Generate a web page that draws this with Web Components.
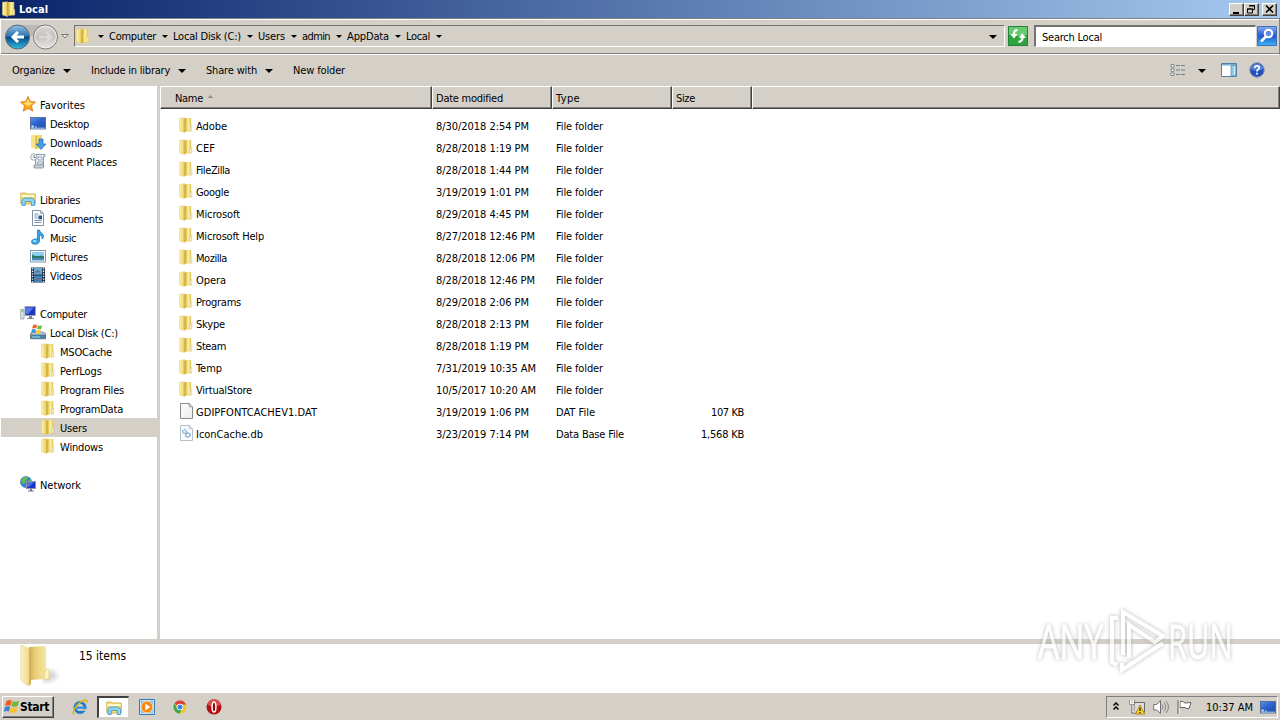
<!DOCTYPE html>
<html lang="en">
<head>
<meta charset="utf-8">
<title>Local</title>
<style>
  html, body { margin: 0; height: 100%; overflow: hidden; }
  body {
    --face: #d4d0c8;
    font: 11px/14px "DejaVu Sans Condensed", "DejaVu Sans", sans-serif;
    color: #000;
    background: #fff;
  }
</style>
</head>
<body>
<explorer-window></explorer-window>
<script>
const arrow = '<svg viewBox="0 0 8 4" width="8" height="4"><path d="M0 0h8L4 4z"/></svg>'
const smallArrow = '<svg viewBox="0 0 6 3" width="6" height="3"><path d="M0 0h6L3 3z"/></svg>'

const icons = {
  folder: `<linearGradient id="a"><stop stop-color="#fdf3b4"/><stop offset=".7" stop-color="#f0d970"/><stop offset="1" stop-color="#e0c052"/></linearGradient>
    <linearGradient id="c"><stop stop-color="#dcbb45"/><stop offset=".5" stop-color="#f2e07c"/><stop offset="1" stop-color="#e2c654"/></linearGradient>
    <path d="M7 1h6.200v13.300L7 14.800z" fill="url(#c)"/><path d="M9.500 1.200h2v12.500h-2z" fill="#f8edaa"/>
    <path d="M1.500 1.300 6.500.7v14.800l-5-1.600z" fill="url(#a)" stroke="#e2cc78" stroke-width=".5"/>
    <path d="M6.300 1.500 7.500 2v12.700l-1.200.6z" fill="#cba83a"/><path d="m12 9 1.700-.5V14h-2z" fill="#fff7ca" stroke="#d5b85c" stroke-width=".5"/>`,
  star: `<path d="m8 .5 2.200 5 5.300.6-4 3.600 1.200 5.400L8 12.400l-4.700 2.700 1.200-5.400-4-3.600 5.300-.6z" fill="#ffa51e" stroke="#d8740c" stroke-width=".8"/><path d="m8 2.500 1.400 4 4 .4-3.500 2L8 10 3 6.800l3.600-.4z" fill="#ffe174"/>`,
  desktop: `<linearGradient id="d" x2=".7" y2="1"><stop stop-color="#5f97e8"/><stop offset=".5" stop-color="#2c62cb"/><stop offset="1" stop-color="#2452ad"/></linearGradient><rect x=".5" y="2.500" width="15" height="11.500" fill="url(#d)" stroke="#49628c" stroke-width=".8"/><path d="M1 12.500h14V14H1z" fill="#88aad3"/><path d="M1.500 10.500h2.200v2H1.500zM5 11.500h1.500v1H5z" fill="#dcecff"/>`,
  downloads: `<path d="M1 1.500 5.500.5V15L1 13.400z" fill="#f7e38a"/><path d="M5.500 1H12v13l-6.500 1z" fill="#efd970"/><path d="M5.500 2h1.200v13H5.500z" fill="#d0ac43"/><path d="M9 5h4v5h3l-5 5.500L6 10h3z" fill="#3f9ee8" stroke="#246ba9" stroke-width=".7"/>`,
  recent: `<path d="M6 1.500h9v2h-1.500V13H5.500V4z" fill="#e9eef2" stroke="#76889a" stroke-width=".8"/><path d="M4 12h9.500q1 2.500-1 3H4z" fill="#cad4dc" stroke="#76889a" stroke-width=".8"/><path d="M8 4h4v3H8zM7.500 9h5v2h-5z" fill="#fff" stroke="#7d95ad" stroke-width=".8"/><circle cx="3.800" cy="4" r="3.200" fill="#f4f6f8" stroke="#8b98a4" stroke-width=".8"/><path d="M4 2v2.500h2" stroke="#566572" fill="none" stroke-width=".8"/>`,
  libraries: `<path d="M.8 4V2h5l1 1h8.500v10H.8z" fill="#f3dc75" stroke="#cda843" stroke-width=".8"/><path d="M1.500 4h13v2h-13z" fill="#fff8ca"/><path d="M2 14.500V9l2-2h8l2.500 2v5.500h-3.200v-4H5.200v4z" fill="#8ed6f7" stroke="#3f91c4" stroke-width=".8"/>`,
  document: `<path d="M2.500.5h8l3 3v12h-11z" fill="#fff" stroke="#8094a9"/><path d="M10.500.5v3h3z" fill="#d1dfeb" stroke="#8094a9" stroke-width=".7"/><path d="M4.500 4h4M4.500 6h3M4.500 8h3M4.500 10.500h7M4.500 12.500h7" stroke="#6e87a4" stroke-width=".9"/><path d="M8.500 5.500h3.500v3.700H8.500z" fill="#294d90"/>`,
  music: `<path d="M7.500 1h2c.3 2.500 4 3.500 4 6.500 0 1-.5 2-1.300 2.600C12.600 7.500 11 6.500 9.500 6v6c0 4-8 4.500-8 .8C1.500 10.500 5 9.500 7.500 10z" fill="#35a3e8" stroke="#1d6fae" stroke-width=".7"/><ellipse cx="4.700" cy="12" rx="2" ry="1.200" fill="#90d8ff"/>`,
  pictures: `<rect x=".5" y="2.500" width="15" height="11.500" fill="#fff" stroke="#7f98ab"/><path d="M2 4h12v5H2z" fill="#8ad0f0"/><path d="M2 6.500q3 2 6 1.500t6 0V11H2z" fill="#2e785c"/><path d="M2 10h12v2.500H2z" fill="#438bc0"/>`,
  videos: `<path d="M1 .5h14v15H1z" fill="#273342"/><path d="M4 1h8v6.500H4z" fill="#5cadde"/><path d="M4 8.500h8V15H4z" fill="#3a83c0"/><path d="m5 5 3-2 3 2.500H4zm0 8 3-2 3 2z" fill="#8a6365"/><path d="M2.500 1v15M13.500 1v15" stroke="#e6edf4" stroke-width="1.300" stroke-dasharray="1.300"/>`,
  computer: `<rect x="5" y="1.500" width="10.500" height="9" fill="#1d36bb" stroke="#a3a9b9"/><path d="M6 2.500h8L8 9H6z" fill="#5678eb"/><path d="M9 11h3v2H9zM7 13h7v1H7z" fill="#7d838b"/><path d="M.7 4.500H4V14H.7z" fill="#dce4e9" stroke="#8795a2" stroke-width=".7"/><path d="M1.500 6h1.700" stroke="#41a446"/>`,
  disk: `<path d="m2 9 1.500-1h9l3 1.500V14H.7V9z" fill="#b8c9d5" stroke="#61798a" stroke-width=".7"/><path d="M.7 11h15v3.800H.7z" fill="#4a86a8" stroke="#496a7e" stroke-width=".7"/><path d="M2 13h8" stroke="#a9e0e9"/><path d="M3 1q2.500-1.200 4 0l-.8 3.500Q4.500 3.500 2.200 4.700z" fill="#ef6524"/><path d="M7.800 1.200q2 1 4.500 0l-1 3.500q-2 1-4.200 0z" fill="#70bd3b"/><path d="m2 5.500q2-1 4 0L5 9q-2-1-4 0z" fill="#3a95dc"/><path d="M6.700 5.500q2 1 4.300 0L10 9Q8 10 5.700 9z" fill="#fecc30"/>`,
  network: `<circle cx="6" cy="6" r="5.600" fill="#2b88d1" stroke="#2773ac" stroke-width=".5"/><path d="M2 3q4-4 6-1L6 5 4 8 1 6zm6 2 3-2v4z" fill="#65bb52"/><rect x="6.500" y="5.500" width="9" height="7" fill="#1b36c4" stroke="#8993ad"/><path d="M7 6h7l-5 5H7z" fill="#5271e5"/><path d="M10 13h2v1.500h2v1H8v-1h2z" fill="#6f7983"/>`,
  file: `<linearGradient id="g" y2="1"><stop stop-color="#fff"/><stop offset="1" stop-color="#eaebed"/></linearGradient><path d="M2.500.5h8.700l3.300 3.300v11.700h-12z" fill="url(#g)" stroke="#888c91"/><path d="M11.200.5v3.300h3.300" fill="#d6d8da" stroke="#888c91" stroke-width=".8"/>`,
  database: `<path d="M2.500.5h8.700l3.300 3.300v11.700h-12z" fill="#f8fbff" stroke="#b6bec8"/><path d="M11.200.5v3.300h3.300" fill="none" stroke="#b6bec8"/><circle cx="6.500" cy="6.500" r="1.800" fill="none" stroke="#82a9d0" stroke-width="1.500" stroke-dasharray="1 .4"/><circle cx="9.800" cy="10" r="2.100" fill="none" stroke="#719dc9" stroke-width="1.500" stroke-dasharray="1 .4"/>`,
  views: `<g fill="#fff" stroke="#6f7d8b" stroke-width=".9"><path d="M1 2.500h3v2.500H1zM1 6.800h3v2.500H1zM1 11h3v2.500H1z"/></g><path d="M6 3.500h4m1 0h4M6 8h4m1 0h4M6 12.500h4m1 0h4" stroke="#6f7d8b" stroke-width="1.200"/>`,
  preview: `<path d="M.5 1.500h15v13H.5z" fill="#fff" stroke="#527da6"/><path d="M1 2h14v1.500H1z" fill="#78acd0"/><path d="M10 3.500h5V14h-5z" fill="#8ec8e3" stroke="#548fac" stroke-width=".7"/><path d="M13 4h1v9h-1z" fill="#d9f3ff"/>`,
  help: `<circle cx="8" cy="8" r="7.200" fill="#2350ba" stroke="#7f91ae"/><path d="M2 7a6 5 0 0 1 12 0q-6 3-12 0" fill="#5782dc"/><path d="M5.800 6Q5.800 3.800 8 3.800q2.300 0 2.300 2Q10.300 7 8.800 7.800q-.8.400-.8 1.700" stroke="#fff" stroke-width="1.700" fill="none"/><path d="M7.100 10.700h1.800v1.700H7.100z" fill="#fff"/>`,
  flagLogo: `<path d="M2.500 2q3-2 5.300-.3L6.500 6.800Q4 5.500 1.200 7z" fill="#ef5b22"/><path d="M8.700 2q2.500 1.500 6.300-.2l-1.300 5Q10.500 8.500 7.300 7z" fill="#6cb83b"/><path d="M1 8q3-1.600 5.200-.2L5 12.500Q2.300 11.300-.3 13z" fill="#3984d4"/><path d="M7 8q3 1.500 6.400 0l-1.300 5.200q-3 1.600-6.400-.2z" fill="#f9c02d"/>`,
  ie: `<circle cx="8" cy="8.500" r="5" fill="none" stroke="#1c7dd0" stroke-width="3"/><path d="M10 10.200h6v1.600h-6z" fill="var(--face)"/><path d="M5 7.500h9.500v2.300H5z" fill="#2b95df"/><path d="M2.500 14.800Q-.5 15 3 9 7.500 2.500 13 1q3-.2 1.500 3" fill="none" stroke="#d9b51d" stroke-width="1.500"/>`,
  player: `<path d="M.5.5h15v15H.5z" fill="#c6e1f5" stroke="#347db8"/><path d="M2 2h12v12H2z" fill="#8fc4e8"/><circle cx="8" cy="8" r="5.900" fill="#f78714" stroke="#fff1c3" stroke-width=".7"/><path d="m6.300 4.500 5 3.500-5 3.500z" fill="#fff"/>`,
  chrome: `<circle cx="8" cy="8" r="6.500" fill="#f4c524"/><path d="M8 8 2.400 4.700A6.500 6.500 0 0 1 14 5.500H8z" fill="#df4035"/><path d="M2.400 4.700A6.500 6.500 0 0 0 7.500 14.500L10 10 5 9z" fill="#36a650"/><circle cx="8" cy="8" r="3.300" fill="#fff"/><circle cx="8" cy="8" r="2.500" fill="#4086e8"/>`,
  opera: `<circle cx="8" cy="8" r="7.500" fill="#b80c14"/><path d="M1.500 6a6.500 6 0 0 1 13 0q-7 3-13 0" fill="#d94a4a"/><ellipse cx="8" cy="8" rx="1.900" ry="5" fill="#8e070d" stroke="#fff" stroke-width="1.500"/>`,
  chevrons: `<path d="m5.500 6.500 2.500-2.500 2.500 2.500m-5 4 2.500-2.500 2.500 2.500" fill="none" stroke="#000" stroke-width="1.500"/>`,
  net: `<path d="M5 3.500h10.500V13H5z" fill="#ddd" stroke="#686868"/><path d="M1 1v4.500h4V1M3 5v9h5" fill="none" stroke="#555"/><path d="M1.500 1v4h3V1M4 6v7h3" fill="none" stroke="#fff"/><path d="m11 6 4.800 9H6.500z" fill="#f8d31d" stroke="#927109" stroke-width=".7"/><path d="M11 8.500V12m0 1v1.200" stroke="#222" stroke-width="1.300"/>`,
  speaker: `<path d="M.7 5.500h3L7.500 1.500v13L3.700 11h-3z" fill="#fff" stroke="#707070"/><path d="M9 5.500q2 2.500 0 5M11 3.800q3.500 4.200 0 8.500M13 2q5 6 0 12" fill="none" stroke="#858585"/>`,
  flag: `<path d="M3 2.500q3-1 5 1.500l6-.5-2 6q-2 1-4-1H3z" fill="#fff" stroke="#606060"/><path d="M2 1v14" stroke="#fff"/><path d="M1 1v14" stroke="#606060"/>`,
  refresh: `<path d="M0 0h20v20H0z" fill="#2da43c"/><path d="M0 0h20v9Q10 12 0 8z" fill="#67ca6c"/><path d="M.5.500h19v19H.5z" fill="none" stroke="#23813a"/><path d="M9.500 4.200Q6 4 6 8M10.500 15.800q4-.3 4-4.300" fill="none" stroke="#fff" stroke-width="2.200"/><path d="M2.300 8h7.200l-3.500 4.500zM10.800 12l3.500-4.800 3.700 4.800z" fill="#fff"/>`,
  search: `<linearGradient id="s" x2="0" y2="1"><stop stop-color="#8aaef2"/><stop offset=".5" stop-color="#2456d4"/><stop offset="1" stop-color="#3cb7ec"/></linearGradient><path d="M.5.500h19v19H.5z" fill="url(#s)" stroke="#3b70c0"/><circle cx="11.500" cy="7.500" r="3.800" fill="#5c8def" stroke="#fff" stroke-width="2"/><path d="m9 10.500-5 5" stroke="#fff" stroke-width="2.500"/>`
}

function render(el, styles, html) {
  el.attachShadow({ mode: 'open' }).innerHTML =
    `<style>*{box-sizing:border-box}svg{display:block}${styles}</style>${html}`
}

class UiIcon extends HTMLElement {
  connectedCallback() {
    if (this.shadowRoot) return
    const size = this.getAttribute('size') || 16
    const box = size > 18 ? 20 : 16
    render(this, ':host{display:block;flex:none}',
      `<svg width="${size}" height="${size}" viewBox="0 0 ${box} ${box}">${icons[this.getAttribute('name')]}</svg>`)
  }
}

// Label whose tracking is adjusted to fill the given width
class UiText extends HTMLElement {
  connectedCallback() {
    if (this.shadowRoot) return
    render(this, ':host{display:block;flex:none;white-space:nowrap;padding-top:var(--drop,2px)}span{display:inline-block}', '<span><slot></slot></span>')
    const width = Number(this.getAttribute('width'))
    if (!width) return
    const span = this.shadowRoot.querySelector('span')
    const natural = span.getBoundingClientRect().width
    const spacing = (width - natural) / this.textContent.length
    span.style.letterSpacing = `${spacing}px`
    this.style.width = `${width}px`
  }
}

class TitleBar extends HTMLElement {
  connectedCallback() {
    render(this, `
      :host { display: flex; height: 18px; padding: 0 3px 0 1px; align-items: center; color: #fff; font-weight: bold; background: linear-gradient(90deg, #0a246a, #a6caf0); }
      ui-text { flex: 1; padding-left: 2px; }
      button { width: 15px; height: 13px; padding: 0; border: 1px solid; border-color: #fff #404040 #404040 #fff; background: var(--face); box-shadow: inset -1px -1px #808080; }
      button:last-child { margin-left: 3px; }
    `, `<ui-icon name="folder"></ui-icon><ui-text>Local</ui-text>
      <button aria-label="Minimize"><svg width="13" height="11"><path d="M3 8h6v2H3z"/></svg></button>
      <button aria-label="Restore"><svg width="13" height="11"><path d="M4.500 1.500h5v4H8M4 2h6M2.500 5h5v4h-5zM2 5h6" fill="none" stroke="#000"/></svg></button>
      <button aria-label="Close"><svg width="13" height="11"><path d="m3 1.500 7 7m0-7-7 7" stroke="#000" stroke-width="1.600"/></svg></button>`)
  }
}

class AddressBar extends HTMLElement {
  connectedCallback() {
    const path = [['Computer', 47], ['Local Disk (C:)', 68], ['Users', 27], ['admin', 28], ['AppData', 42], ['Local', 24]]
    render(this, `
      :host { display: flex; height: 37px; padding: 3px 1px 0 3px; border: solid; border-color: #808080 #808080 #fff #fff; border-width: 1px; background: var(--face); box-shadow: inset 0 1px #fff, inset 0 -1px #808080; }
      .nav { display: flex; width: 70px; height: 28px; align-items: center; padding-top: 1px; }
      .recent { margin-left: -1px; }
      .path, .search { display: flex; align-items: center; height: 22px; margin-top: 3px; border: 1px solid; border-color: #74726e #fff #fff #74726e; }
      .path { width: 931px; }
      .path ui-icon { width: 17px; margin-top: -1px; }
      .arrow { width: 17px; display: flex; justify-content: center; padding-top: 1px; }
      .open { margin-left: auto; padding: 1px 7px 0 0; }
      .refresh { margin: 4px 0 0 3px; }
      .search { width: 222px; margin-left: 6px; padding-left: 6px; border-width: 2px 1px 1px 2px; background: #fff; }
      .go { margin: 4px 0 0 1px; }
    `, `<div class="nav">
        <svg width="58" height="28" viewBox="0 0 58 28">
          <defs><linearGradient id="b" x2="0" y2="1"><stop stop-color="#94c3e4"/><stop offset=".45" stop-color="#2d75b4"/><stop offset=".52" stop-color="#064c8a"/><stop offset="1" stop-color="#35bce1"/></linearGradient>
          <linearGradient id="f" x2="0" y2="1"><stop stop-color="#d9d8d5"/><stop offset=".5" stop-color="#c3c2be"/><stop offset="1" stop-color="#e9e8e4"/></linearGradient></defs>
          <path d="M13 2h29v11H13z" fill="#bbb9b5"/><circle cx="13.500" cy="14" r="12" fill="url(#b)" stroke="#52687e"/>
          <path d="M20 14H9m5-5-5 5 5 5" fill="none" stroke="#fff" stroke-width="3"/>
          <circle cx="41.500" cy="14" r="12" fill="url(#f)" stroke="#77787a"/><circle cx="41.500" cy="14" r="10.800" fill="none" stroke="#efefed"/>
          <path d="M35 14h12m-5-5 5 5-5 5" fill="none" stroke="#dad9d6" stroke-width="2.500"/>
        </svg><svg class="recent" width="8" height="5"><path d="M.7.500h6.600L4 4z" fill="#eee" stroke="#777"/></svg>
      </div>
      <div class="path"><ui-icon name="folder"></ui-icon>${path.map(([name, w]) => `<span class="arrow">${smallArrow}</span><ui-text width="${w}">${name}</ui-text>`).join('')}<span class="arrow">${smallArrow}</span><span class="open">${arrow}</span></div>
      <ui-icon class="refresh" name="refresh" size="20"></ui-icon>
      <div class="search"><ui-text width="60">Search Local</ui-text></div>
      <ui-icon class="go" name="search" size="20"></ui-icon>`)
  }
}

class CommandBar extends HTMLElement {
  connectedCallback() {
    render(this, `
      :host { --drop: 0; display: flex; height: 31px; padding: 0 15px 0 12px; align-items: center; background: var(--face); }
      svg { margin: 0 20px 0 8px; }
      .right { display: flex; margin-left: auto; align-items: center; }
      .right svg { margin: 0 15px 0 12px; }
      .right ui-icon { margin-top: -1px; }
      .right ui-icon:last-child { margin-left: 12px; }
    `, `<ui-text width="43">Organize</ui-text>${arrow}<ui-text width="79">Include in library</ui-text>${arrow}
      <ui-text width="51">Share with</ui-text>${arrow}<ui-text width="52">New folder</ui-text>
      <div class="right"><ui-icon name="views"></ui-icon>${arrow}<ui-icon name="preview"></ui-icon><ui-icon name="help"></ui-icon></div>`)
  }
}

class TreeItem extends HTMLElement {
  connectedCallback() {
    const level = Number(this.getAttribute('level'))
    render(this, `
      :host { display: flex; height: 19px; margin-left: 1px; align-items: center; gap: 4px; padding-left: ${19 + level * 10}px; }
      :host([selected]) { background: var(--face); }
      ui-icon { margin-top: -1px; }
    `, `<ui-icon name="${this.getAttribute('icon')}"></ui-icon><ui-text width="${this.getAttribute('width')}">${this.textContent}</ui-text>`)
  }
}

class FolderTree extends HTMLElement {
  connectedCallback() {
    const groups = [
      [['Favorites', 'star', 0, 45], ['Desktop', 'desktop', 1, 39], ['Downloads', 'downloads', 1, 52], ['Recent Places', 'recent', 1, 67]],
      [['Libraries', 'libraries', 0, 40], ['Documents', 'document', 1, 53], ['Music', 'music', 1, 26], ['Pictures', 'pictures', 1, 38], ['Videos', 'videos', 1, 32]],
      [['Computer', 'computer', 0, 47], ['Local Disk (C:)', 'disk', 1, 68], ['MSOCache', 'folder', 2, 52], ['PerfLogs', 'folder', 2, 42], ['Program Files', 'folder', 2, 64], ['ProgramData', 'folder', 2, 63], ['Users', 'folder', 2, 27, 'selected'], ['Windows', 'folder', 2, 43]],
      [['Network', 'network', 0, 41]]
    ]
    render(this, `
      :host { display: flex; flex-direction: column; gap: 19px; width: 157px; padding-top: 9px; background: #fff; }
    `, groups.map((group) => `<section>${group.map(([label, icon, level, width, state = '']) =>
      `<tree-item icon="${icon}" level="${level}" width="${width}" ${state}>${label}</tree-item>`).join('')}</section>`).join(''))
  }
}

class FileList extends HTMLElement {
  connectedCallback() {
    const folders = [
      ['Adobe', 31, '8/30/2018 2:54 PM'], ['CEF', 19, '8/28/2018 1:19 PM'], ['FileZilla', 34, '8/28/2018 1:44 PM'],
      ['Google', 33, '3/19/2019 1:01 PM'], ['Microsoft', 44, '8/29/2018 4:45 PM'], ['Microsoft Help', 68, '8/27/2018 12:46 PM'],
      ['Mozilla', 31, '8/28/2018 12:06 PM'], ['Opera', 30, '8/28/2018 12:46 PM'], ['Programs', 45, '8/29/2018 2:06 PM'],
      ['Skype', 29, '8/28/2018 2:13 PM'], ['Steam', 30, '8/28/2018 1:19 PM'], ['Temp', 26, '7/31/2019 10:35 AM'],
      ['VirtualStore', 56, '10/5/2017 10:20 AM']
    ].map((f) => [...f, 'folder', 'File folder', 47, '', 0])
    const rows = [
      ...folders,
      ['GDIPFONTCACHEV1.DAT', 121, '3/19/2019 1:06 PM', 'file', 'DAT File', 39, '107 KB', 33],
      ['IconCache.db', 67, '3/23/2019 7:14 PM', 'database', 'Data Base File', 68, '1,568 KB', 43]
    ]
    const dateWidth = (date) => (date.length === 17 ? 93 : date.endsWith('AM') ? 100 : 99)
    render(this, `
      :host { display: block; flex: 1; background: #fff; }
      .head, .row { display: grid; grid-template-columns: 272px 120px 120px 80px 1fr; }
      .head { height: 23px; margin-bottom: 6px; }
      .head div { display: flex; align-items: center; padding-left: 3px; background: var(--face); border: solid; border-width: 1px 1px 1px 1px; border-color: #fff #404040 #404040 #fff; box-shadow: inset -1px -1px #808080; }
      .head div:first-child { padding-left: 14px; }
      .head div:first-child svg { margin: -3px 0 0 5px; }
      .row { height: 22px; align-items: center; }
      .name { display: flex; align-items: center; gap: 2px; padding-left: 18px; }
      .name ui-icon { margin-top: -2px; }
      .cell { padding-left: 4px; }
      .size { display: flex; justify-content: flex-end; padding-right: 8px; }
    `, `<div class="head">
        <div><ui-text width="28">Name</ui-text><svg width="5" height="3"><path d="M0 3h5L2.500 0z" fill="#8b8985"/></svg></div>
        <div><ui-text width="67">Date modified</ui-text></div><div><ui-text width="24">Type</ui-text></div><div><ui-text width="19">Size</ui-text></div><div></div>
      </div>` + rows.map(([name, width, date, icon, type, typeWidth, size, sizeWidth]) => `<div class="row">
        <div class="name"><ui-icon name="${icon}"></ui-icon><ui-text width="${width}">${name}</ui-text></div>
        <div class="cell"><ui-text width="${dateWidth(date)}">${date}</ui-text></div>
        <div class="cell"><ui-text width="${typeWidth}">${type}</ui-text></div>
        <div class="size">${size && `<ui-text width="${sizeWidth}">${size}</ui-text>`}</div>
      </div>`).join(''))
  }
}

class DetailsPane extends HTMLElement {
  connectedCallback() {
    render(this, `
      :host { --drop: 0; display: flex; height: 48px; padding-left: 18px; background: #fff; }
      ui-text { margin: 5px 0 0 19px; font-size: 12px; }
    `, `<svg width="42" height="44" viewBox="0 0 42 44">
        <defs><linearGradient id="l"><stop stop-color="#fbf2c1"/><stop offset="1" stop-color="#eed685"/></linearGradient>
        <linearGradient id="r"><stop stop-color="#d3af52"/><stop offset=".4" stop-color="#ead27c"/><stop offset="1" stop-color="#f6e6a1"/></linearGradient>
        <filter id="blur"><feGaussianBlur stdDeviation="2"/></filter></defs>
        <path d="m25 35 7-10q7 3 8 8-6 5-15 6z" fill="#d7d7d7" filter="url(#blur)"/>
        <path d="M11 3l17-1v33l-16 1z" fill="url(#r)"/><path d="M3 1q6 3 9 4v36l-2 1-7-6z" fill="url(#l)" stroke="#e5cf82" stroke-width=".7"/>
        <path d="m11 5 2 1v34l-2 1z" fill="#d1b159"/><path d="M27 26q3-2 4 0v9h-5z" fill="#fff4c5" stroke="#d9bd62" stroke-width=".6"/>
      </svg><ui-text width="47">15 items</ui-text>`)
  }
}

class TaskBar extends HTMLElement {
  connectedCallback() {
    render(this, `
      :host { --drop: 0; display: flex; height: 28px; padding: 4px 2px 2px; background: var(--face); box-shadow: inset 0 1px #fff; }
      .start { display: flex; width: 52px; height: 22px; padding-left: 1px; align-items: center; font-weight: bold; border: 1px solid; border-color: #fff #404040 #404040 #fff; box-shadow: inset -1px -1px #808080; }
      .start ui-text { font-size: 12px; }
      .apps { display: flex; align-items: center; padding-left: 18px; }
      .active { display: flex; justify-content: center; align-items: center; width: 32px; height: 22px; margin: 0 10px 0 9px; background: #fff; border: solid; border-color: #404040 #d4d0c8 #d4d0c8 #404040; border-width: 2px 1px 1px 2px; }
      .chrome { margin: 0 18px 0 17px; }
      .tray { --drop: 1px; display: flex; align-items: center; width: 172px; height: 22px; margin-left: auto; padding: 0 1px 0 1px; border: 1px solid; border-color: #808080 #fff #fff #808080; }
      .tray ui-icon:nth-child(2) { margin-left: 5px; }
      .tray ui-icon:nth-child(3), .tray ui-icon:nth-child(4) { margin-left: 8px; }
      .tray ui-text { margin: 0 7px 0 13px; }
    `, `<div class="start"><ui-icon name="flagLogo"></ui-icon><ui-text width="29">Start</ui-text></div>
      <div class="apps"><ui-icon name="ie"></ui-icon><span class="active"><ui-icon name="libraries"></ui-icon></span><ui-icon name="player"></ui-icon><ui-icon class="chrome" name="chrome"></ui-icon><ui-icon name="opera"></ui-icon></div>
      <div class="tray"><ui-icon name="chevrons"></ui-icon><ui-icon name="net"></ui-icon><ui-icon name="speaker"></ui-icon><ui-icon name="flag"></ui-icon><ui-text width="47">10:37 AM</ui-text><ui-icon name="desktop"></ui-icon></div>`)
  }
}

// Translucent mark that floats over the bottom right of the window
class WaterMark extends HTMLElement {
  connectedCallback() {
    render(this, `
      :host { position: absolute; left: 1038px; top: 604px; display: grid; grid-template-columns: 70px 60px 64px; height: 76px; opacity: .7; pointer-events: none; filter: drop-shadow(0 0 2px #999); color: #fff; }
      span { font: 48px/74px "Open Sans", sans-serif; width: max-content; transform-origin: 0 50%; -webkit-text-stroke: .8px #fff; }
      .any { transform: scaleX(.68); }
      .run { transform: scaleX(.63); }
      svg { overflow: visible; }
    `, `<span class="any">ANY</span>
      <svg width="60" height="76" viewBox="78 0 60 76"><path d="M88 14h-6v44l5 3M93 51V8l40 24-8 6-26-17v33M92 59v7l41-27" fill="none" stroke="#fff" stroke-width="4"/></svg>
      <span class="run">RUN</span>`)
    // Condense both words to the width of their columns
    const words = this.shadowRoot.querySelectorAll('span')
    words.forEach((word) => {
      word.style.transform = `scaleX(${65 / word.offsetWidth})`
    })
  }
}

class ExplorerWindow extends HTMLElement {
  connectedCallback() {
    render(this, `
      :host { display: flex; flex-direction: column; width: 1280px; height: 720px; position: relative; overflow: hidden; background: var(--face); }
      main { display: flex; height: 553px; gap: 3px; background: var(--face); }
      details-pane { margin-top: 5px; }
    `, `<title-bar></title-bar><address-bar></address-bar><command-bar></command-bar>
      <main><folder-tree></folder-tree><file-list></file-list></main>
      <details-pane></details-pane><task-bar></task-bar><water-mark></water-mark>`)
  }
}

customElements.define('ui-icon', UiIcon)
customElements.define('ui-text', UiText)
customElements.define('title-bar', TitleBar)
customElements.define('address-bar', AddressBar)
customElements.define('command-bar', CommandBar)
customElements.define('tree-item', TreeItem)
customElements.define('folder-tree', FolderTree)
customElements.define('file-list', FileList)
customElements.define('details-pane', DetailsPane)
customElements.define('task-bar', TaskBar)
customElements.define('water-mark', WaterMark)
customElements.define('explorer-window', ExplorerWindow)
</script>
</body>
</html>
